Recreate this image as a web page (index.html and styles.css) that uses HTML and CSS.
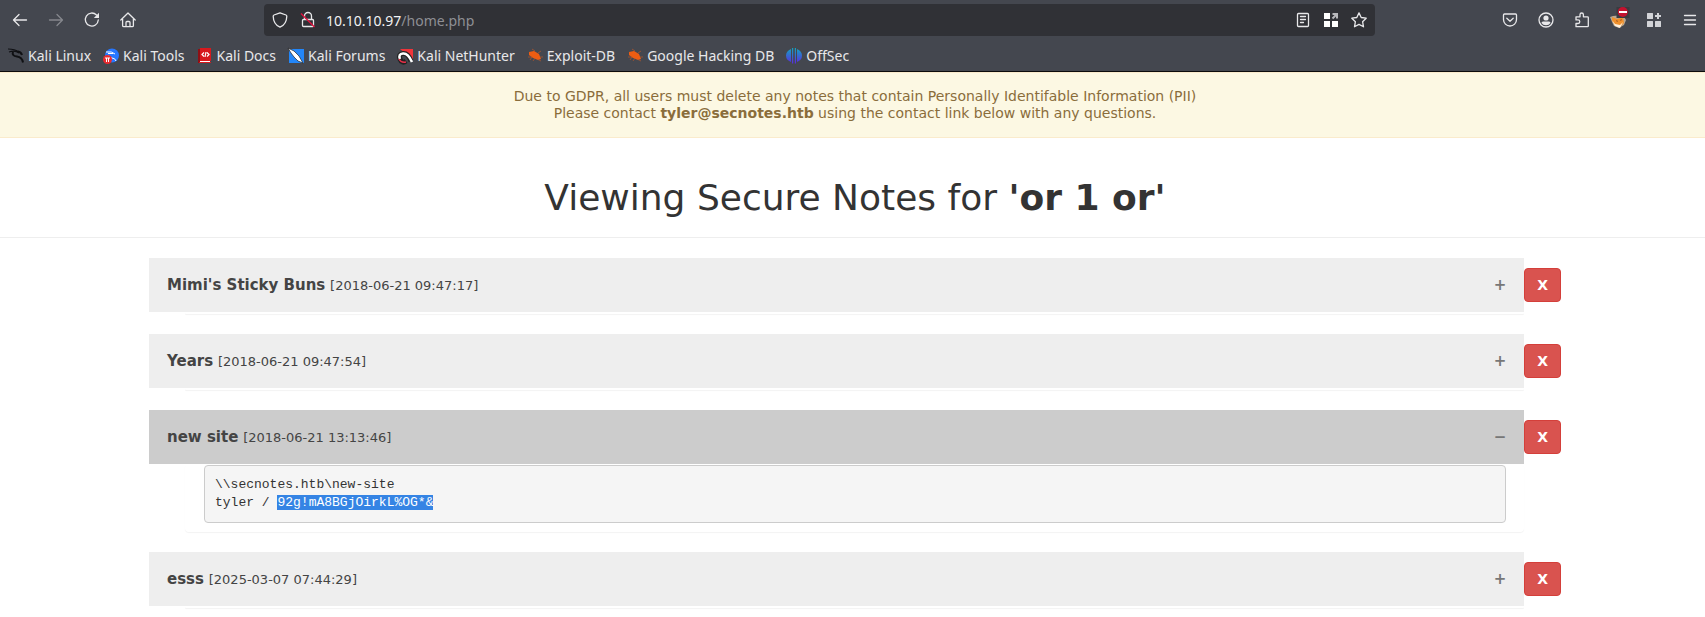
FILE: index.html
```html
<!DOCTYPE html>
<html lang="en">
<head>
<meta charset="utf-8">
<title>Secure Notes</title>
<link rel="stylesheet" href="styles.css">
</head>
<body>
<header class="browser">
  <div class="toolbar">
    <nav class="tools" aria-label="Navigation">
      <button class="tool" aria-label="Back"><svg class="icon" viewBox="0 0 16 16"><path class="line" d="M14.500 8H1.500M7 2.500L1.500 8 7 13.500"/></svg></button>
      <button class="tool tool-off" aria-label="Forward"><svg class="icon" viewBox="0 0 16 16"><path class="line" d="M1.500 8h13M9 2.500L14.500 8 9 13.500"/></svg></button>
      <button class="tool" aria-label="Reload"><svg class="icon" viewBox="0 0 16 16"><path class="line" d="M12.500 3A6.500 6.500 0 1 0 14.300 8"/><path class="fill" d="M15 .8v5.200H9.800z"/></svg></button>
      <button class="tool" aria-label="Home"><svg class="icon" viewBox="0 0 16 16"><path class="line" d="M.8 8L8 1l7.200 7M2.600 7v6.500q0 1.200 1.200 1.200h8.400q1.200 0 1.200-1.200V7M6 14.500v-4q0-1 1-1h2q1 0 1 1v4"/></svg></button>
    </nav>
    <div class="address">
      <button class="tool" aria-label="Tracking protection"><svg class="icon" viewBox="0 0 16 16"><path class="line" d="M8 .8l6 2.200q.8.300.8 1.200C14.700 9 12.500 13.200 8 15.200 3.500 13.200 1.300 9 1.200 4.200q0-.9.8-1.200z"/></svg></button>
      <button class="tool" aria-label="Connection not secure"><svg class="icon" viewBox="0 0 16 16"><path class="line" d="M4.500 7.500V4a3.500 3.500 0 0 1 7 0v3.500M3.500 7.500h9q1 0 1 1v5q0 1-1 1h-9q-1 0-1-1v-5q0-1 1-1z"/><path class="slash" d="M1 1.500l13.500 13.500"/></svg></button>
      <a class="url" href="#">10.10.10.97<span class="path">/home.php</span></a>
      <button class="tool" aria-label="Reader view"><svg class="icon" viewBox="0 0 16 16"><path class="line" d="M3.500 1.500h9q1 0 1 1v11q0 1-1 1h-9q-1 0-1-1v-11q0-1 1-1zM5.500 4.500h5M5.500 7.500h5M5.500 10.500h3"/></svg></button>
      <button class="tool" aria-label="Open grid"><svg class="icon" viewBox="0 0 16 16"><path class="white" d="M1 1h6v6H1zM1 9h6v6H1zM9 9h6v6H9z"/><path class="arrow" d="M9.500 6.500l4-4M9.500 2H14v4.500"/></svg></button>
      <button class="tool" aria-label="Bookmark"><svg class="icon" viewBox="0 0 16 16"><path class="line" d="M8 .9l2.200 4.600 5 .7-3.600 3.500.9 5.100L8 12.400l-4.500 2.400.9-5.100L.8 6.200l5-.7z"/></svg></button>
    </div>
    <nav class="tools" aria-label="Extensions">
      <button class="tool" aria-label="Pocket"><svg class="icon" viewBox="0 0 16 16"><path class="line" d="M2.500 2h11q1 0 1 1v4.500a6.500 6.500 0 0 1-13 0V3q0-1 1-1zM4.800 6.200L8 9.200l3.200-3"/></svg></button>
      <button class="tool" aria-label="Account"><svg class="icon" viewBox="0 0 16 16"><circle class="line" cx="8" cy="8" r="7"/><circle class="fill" cx="8" cy="6" r="2.600"/><path class="fill" d="M3.500 11q0-1.500 1.500-1.500h6q1.500 0 1.500 1.500Q11 13.200 8 13.200T3.500 11z"/></svg></button>
      <button class="tool" aria-label="Extensions"><svg class="icon" viewBox="0 0 16 16"><path class="line" d="M2 14.700V11.500h2a1.800 1.800 0 0 0 0-3.600H2V4.800h4V2.700a1.700 1.700 0 0 1 3.400 0v2.100h4.100q.8 0 .8.800v8.300q0 .8-.8.800z"/></svg></button>
      <button class="tool" aria-label="FoxyProxy"><svg class="icon" viewBox="0 0 16 16"><path fill="#b9a893" d="M0 5l3-1 10-1 3 5-2 5-5 3-5-2-2-4z"/><path fill="#f0912d" d="M2 5l5 2 6-2 1 6-4 4-5-2-3-4z"/><path fill="#fff1dd" d="M2 8l3 4 5 1 3-3-3 6-5-2z"/><path fill="#8a4a20" d="M6 8l2 1-1 1zM10 8l2-1-1 2z"/><path fill="#3a3b40" d="M6.500-5h13V6h-13z"/><circle cx="12.800" cy="0" r="5" fill="#c4122f"/><path fill="#fff" d="M9-1h8v2H9z"/></svg></button>
      <button class="tool" aria-label="Add panel"><svg class="icon" viewBox="0 0 16 16"><path class="soft" d="M1.500 1h5q.5 0 .5.500v5q0 .5-.5.500h-5Q1 7 1 6.500v-5Q1 1 1.500 1zM1.500 9h5q.5 0 .5.500v5q0 .5-.5.500h-5q-.5 0-.5-.5v-5q0-.5.5-.5zM9.500 9h5q.5 0 .5.500v5q0 .5-.5.500h-5q-.5 0-.5-.5v-5q0-.5.5-.5zM11 1h2v2h2v2h-2v2h-2V5H9V3h2z"/></svg></button>
      <button class="tool" aria-label="Menu"><svg class="icon" viewBox="0 0 16 16"><path class="line" d="M2.500 3.500h11M2.500 8h11M2.500 12.500h11"/></svg></button>
    </nav>
  </div>
  <nav class="bookmarks" aria-label="Bookmarks">
    <a class="bookmark" href="#"><svg class="icon" viewBox="0 0 16 16"><path class="ink" d="M0 1q7 0 11 3M1 4q6-2 10 1"/><path class="ink-bold" d="M5 3.500Q3.500 8 9 8.500q5 .5 6 6M10 3.500q3 .5 4 3.500"/></svg>Kali Linux</a>
    <a class="bookmark" href="#"><svg class="icon" viewBox="0 0 16 16"><circle cx="9" cy="7.500" r="7" fill="#2777ff"/><path fill="none" stroke="#fff" d="M3 4q6-1 9 2M5 7q1 3 4 3t4 3M5 5.500h5"/><circle cx="4.500" cy="11.500" r="4.500" fill="#e92a2f"/><path stroke="#fff" d="M2 10h5M3.500 10v4M5.500 10v4"/></svg>Kali Tools</a>
    <a class="bookmark" href="#"><svg class="icon" viewBox="0 0 16 16"><path fill="#d7191d" d="M3 0h11v13H3z"/><path fill="#8f1015" d="M1 1h2v14H1z"/><path fill="#fff" d="M3 13h10v1H3z"/><path fill="#d7191d" d="M2 14h12v1H2z"/><path fill="none" stroke="#fff" stroke-width="1.200" d="M7 4.500L5 6.500l2 2M10 4.500l2 2-2 2M9 4L8 9"/></svg>Kali Docs</a>
    <a class="bookmark" href="#"><svg class="icon" viewBox="0 0 16 16"><path fill="#2386f8" d="M1 1h15v14H1z"/><path fill="#fff" stroke="#222" stroke-width=".7" d="M0 0l6 3 5 5 4 7-5-2-4-4-3-4z"/></svg>Kali Forums</a>
    <a class="bookmark" href="#"><svg class="icon" viewBox="0 0 16 16"><path fill="#f0343a" d="M3 1h13v11z"/><path fill="none" stroke="#222" stroke-width="5" d="M14 13Q11 5 6 5.500T3 11t6 2"/><path fill="none" stroke="#fff" stroke-width="2.500" d="M15 14Q11 5 6 5.500T3 11"/><path fill="none" stroke="#e8304a" stroke-width="1.500" d="M2 11q2 4 7 3"/></svg>Kali NetHunter</a>
    <a class="bookmark" href="#"><svg class="icon" viewBox="0 0 16 16"><path fill="#ee5d12" d="M2 4l5-1 5 3 2 5-3 1-5-2-4-3z"/><path fill="none" stroke="#b8572a" stroke-width=".7" d="M1 9h4l-2 3M8 3L5 1M11 5l3-2M13 9h3M8 10l-2 3M10 11l4 2"/></svg>Exploit-DB</a>
    <a class="bookmark" href="#"><svg class="icon" viewBox="0 0 16 16"><path fill="#ee5d12" d="M2 4l5-1 5 3 2 5-3 1-5-2-4-3z"/><path fill="none" stroke="#b8572a" stroke-width=".7" d="M1 9h4l-2 3M8 3L5 1M11 5l3-2M13 9h3M8 10l-2 3M10 11l4 2"/></svg>Google Hacking DB</a>
    <a class="bookmark" href="#"><svg class="icon" viewBox="0 0 16 16"><defs><linearGradient id="os" x1="0" y1="0" x2="0" y2="1"><stop offset="0" stop-color="#12a5c0"/><stop offset="1" stop-color="#5a2be0"/></linearGradient></defs><path fill="url(#os)" d="M5 1v13Q0 12 0 7.500T5 1zM11 1v13q5-2 5-6.500T11 1zM6 0h1.200v15.500H6zM8.800 0H10v15.500H8.800z"/></svg>OffSec</a>
  </nav>
</header>
<main class="page">
  <div class="notice">Due to GDPR, all users must delete any notes that contain Personally Identifable Information (PII)<br>Please contact <strong>tyler@secnotes.htb</strong> using the contact link below with any questions.</div>
  <h1 class="title">Viewing Secure Notes for <b>'or 1 or'</b></h1>
  <div class="notes">
    <article class="note">
      <button class="bar"><span><b>Mimi's Sticky Buns</b> <small class="date">[2018-06-21 09:47:17]</small></span><span class="sign">+</span></button>
      <button class="delete">X</button>
      <div class="panel"></div>
    </article>
    <article class="note">
      <button class="bar"><span><b>Years</b> <small class="date">[2018-06-21 09:47:54]</small></span><span class="sign">+</span></button>
      <button class="delete">X</button>
      <div class="panel"></div>
    </article>
    <article class="note">
      <button class="bar bar-open"><span><b>new site</b> <small class="date">[2018-06-21 13:13:46]</small></span><span class="sign">−</span></button>
      <button class="delete">X</button>
      <div class="panel panel-open"><pre class="text"><span>\\secnotes.htb\new-site</span>
<span>tyler / </span><mark class="selected">92g!mA8BGjOirkL%OG*&amp;</mark></pre></div>
    </article>
    <article class="note">
      <button class="bar"><span><b>esss</b> <small class="date">[2025-03-07 07:44:29]</small></span><span class="sign">+</span></button>
      <button class="delete">X</button>
      <div class="panel"></div>
    </article>
  </div>
</main>
</body>
</html>
```
FILE: styles.css
```css
* { box-sizing: border-box; }
body {
  margin: 0;
  background: #fff;
  color: #333;
  font-family: "DejaVu Sans", sans-serif;
  font-size: 14px;
}
button { font-family: inherit; cursor: pointer; }

/* Browser chrome */
.browser {
  background: #44474f;
  border-bottom: 1px solid #0c0c0d;
  color: #e8e8ea;
  font-family: "Noto Sans", sans-serif;
}
.toolbar {
  display: flex;
  align-items: center;
  padding: 4px 7px 4px 12px;
}
.tools { display: flex; gap: 20px; }
.tool {
  display: flex;
  padding: 0;
  border: 0;
  background: none;
  color: #e8e8ea;
}
.tool-off { color: #85878d; }
.icon {
  width: 16px;
  height: 16px;
  flex: none;
  overflow: visible;
}
.line {
  fill: none;
  stroke: currentColor;
  stroke-width: 1.3;
  stroke-linecap: round;
  stroke-linejoin: round;
}
.fill { fill: currentColor; }
.white { fill: #fff; }
.soft { fill: #d3d4d8; }
.arrow { fill: none; stroke: #b8b8bc; stroke-width: 2; }
.slash { stroke: #e0123f; stroke-width: 1.4; }
.ink { fill: none; stroke: #101114; stroke-width: 1.2; }
.ink-bold { fill: none; stroke: #101114; stroke-width: 2; }
.address {
  display: flex;
  flex: 1;
  align-items: center;
  gap: 12px;
  height: 32px;
  margin: 0 127px 0 128px;
  padding: 0 8px;
  border-radius: 4px;
  background: #303136;
}
.url {
  flex: 1;
  margin-left: -2px;
  color: #f2f2f4;
  font-size: 14px;
  text-decoration: none;
}
.path { color: #8e8f94; }
.bookmarks {
  display: flex;
  gap: 12px;
  padding: 6px 8px 5px;
}
.bookmark {
  display: flex;
  align-items: center;
  gap: 4px;
  color: inherit;
  font-size: 14px;
  line-height: 20px;
  text-decoration: none;
}

/* Page */
.notice {
  padding: 15px 15px 15px 20px;
  border: 1px solid #faebcc;
  border-width: 1px 0;
  background: #fcf8e3;
  color: #8a6d3b;
  line-height: 17px;
  text-align: center;
}
.title {
  margin: 40px 0 20px;
  padding: 0 0 19px 5px;
  border-bottom: 1px solid #eee;
  font-size: 36px;
  font-weight: 400;
  line-height: 40px;
  text-align: center;
}
.notes { margin: 0 144px 0 149px; }
.note {
  display: grid;
  grid-template-columns: 1fr auto;
  align-items: center;
  margin-bottom: 20px;
}
.bar {
  display: flex;
  align-items: center;
  justify-content: space-between;
  padding: 18px;
  border: 0;
  background: #eee;
  color: #444;
  font-size: 15px;
  line-height: 18px;
  text-align: left;
}
.bar-open { background: #ccc; }
.date { font-size: 13px; line-height: 1; }
.sign { color: #777; font-size: 15px; font-weight: 700; }
.delete {
  padding: 6px 12px;
  border: 1px solid #d43f3a;
  border-radius: 4px;
  background: #d9534f;
  color: #fff;
  font-size: 14px;
  font-weight: 700;
  line-height: 20px;
}
.panel {
  margin-left: 36px;
  padding: 0 17px 0 18px;
  border: 1px solid transparent;
  border-radius: 4px;
  box-shadow: 0 1px 1px rgba(0, 0, 0, 0.05);
}
.panel-open { padding-bottom: 8px; }
.text {
  margin: 0;
  padding: 10px;
  border: 1px solid #ccc;
  border-radius: 4px;
  background: #f5f5f5;
  color: #333;
  font-family: "Liberation Mono", monospace;
  font-size: 13px;
  line-height: 18px;
}
.selected { background: #3584e4; color: #fff; }
```
